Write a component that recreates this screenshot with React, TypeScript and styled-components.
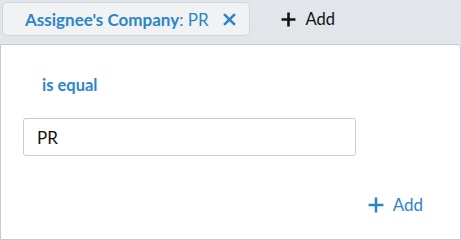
import styled, { createGlobalStyle } from "styled-components";

const GlobalStyle = createGlobalStyle`
  html, body {
    margin: 0;
    padding: 0;
    background: #e2e6ea;
  }
  body {
    font-family: Lato, "Liberation Sans", sans-serif;
  }
`;

const PlusIcon = ({ size = 14, stroke = 2.4 }: { size?: number; stroke?: number }) => (
  <svg width={size} height={size} viewBox="0 0 14 14">
    <path d="M7 0.5v13M0.5 7h13" stroke="currentColor" strokeWidth={stroke} fill="none" />
  </svg>
);

const CloseIcon = () => (
  <svg width="13" height="13" viewBox="0 0 12 12">
    <path d="M1 1l10 10M11 1L1 11" stroke="currentColor" strokeWidth="2.4" fill="none" />
  </svg>
);

export default function App() {
  return (
    <Page>
      <GlobalStyle />
      <TabBar>
        <FilterTab>
          <TabLabel>Assignee's Company</TabLabel>
          <TabValue>: PR</TabValue>
          <CloseButton>
            <CloseIcon />
          </CloseButton>
        </FilterTab>
        <AddTab>
          <PlusIcon size={15} stroke={2.4} />
          Add
        </AddTab>
      </TabBar>
      <Panel>
        <Operator>is equal</Operator>
        <ValueInput defaultValue="PR" />
        <Footer>
          <AddLink>
            <PlusIcon size={16} stroke={2.2} />
            Add
          </AddLink>
        </Footer>
      </Panel>
    </Page>
  );
}

const Page = styled.div`
  width: 461px;
  height: 240px;
  display: flex;
  flex-direction: column;
  box-sizing: border-box;
`;

const TabBar = styled.div`
  display: flex;
  align-items: flex-start;
  padding: 2px 0 0 2px;
  height: 44px;
  box-sizing: border-box;
`;

const FilterTab = styled.div`
  display: flex;
  align-items: center;
  height: 34px;
  box-sizing: border-box;
  padding: 0 13px 0 22px;
  background: #f1f2f4;
  border: 1px solid #cfd5dc;
  border-radius: 5px;
  font-size: 17px;
  color: #2c86c7;
`;

const TabLabel = styled.span`
  font-weight: 700;
`;

const TabValue = styled.span`
  font-weight: 400;
  white-space: pre;
`;

const CloseButton = styled.span`
  display: flex;
  align-items: center;
  margin-left: 14px;
  color: #2c86c7;
`;

const AddTab = styled.div`
  display: flex;
  align-items: center;
  gap: 10px;
  height: 34px;
  margin-left: 31px;
  font-size: 16.5px;
  color: #111;
`;

const Panel = styled.div`
  flex: 1;
  display: flex;
  flex-direction: column;
  background: #fff;
  border: 1px solid #c3ccd6;
  border-radius: 0 4px 0 0;
  padding: 30px 0 0 22px;
`;

const Operator = styled.div`
  font-size: 16.5px;
  font-weight: 700;
  color: #2c86c7;
  margin-left: 19px;
  line-height: 20px;
`;

const ValueInput = styled.input`
  margin-top: 23px;
  width: 333px;
  height: 38px;
  box-sizing: border-box;
  border: 1px solid #c5ccd5;
  border-radius: 3px;
  padding: 0 13px;
  font-family: Lato, "Liberation Sans", sans-serif;
  font-size: 17px;
  color: #111;
  outline: none;
`;

const Footer = styled.div`
  display: flex;
  justify-content: flex-end;
  padding: 39px 37px 0 0;
`;

const AddLink = styled.div`
  display: flex;
  align-items: center;
  gap: 9px;
  font-size: 17px;
  line-height: 20px;
  color: #2c86c7;
`;
